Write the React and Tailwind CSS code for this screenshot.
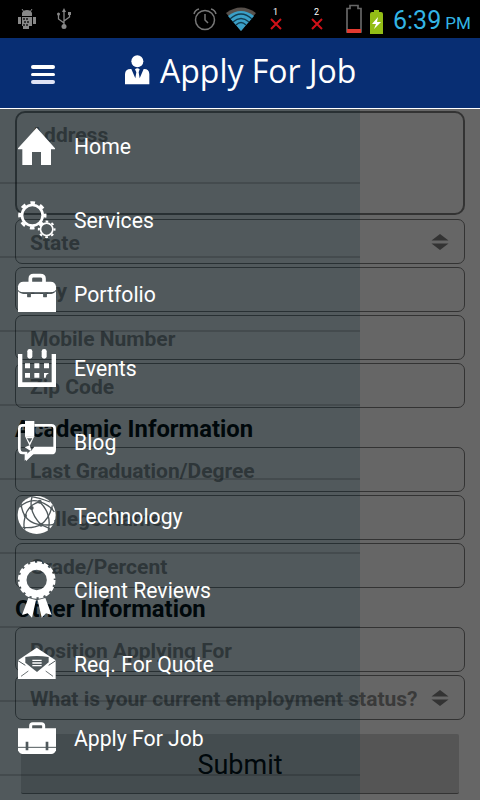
const dark = '#50595c';

const HomeIcon = () => <path d="M56-1 111 61v3H99v47H69V72H42v39H13V64H0v-3z" />;

const GearsIcon = () => (
  <g fill="none" stroke="#fff">
    <circle cx="43" cy="40" r="31" strokeWidth="8" />
    <circle cx="43" cy="40" r="38" strokeWidth="9" strokeDasharray="14 15.85" strokeDashoffset="7" />
    <circle cx="86" cy="82" r="18.5" strokeWidth="5" />
    <circle cx="86" cy="82" r="23.5" strokeWidth="6" strokeDasharray="8 10.46" strokeDashoffset="4" />
  </g>
);

const PortfolioIcon = () => (
  <>
    <path d="M37 18V8Q37-1 46-1H67Q78-1 78 8V18" fill="none" stroke="#fff" strokeWidth="11" />
    <path d="M0 40V31Q2 17 16 17H98Q112 17 114 31V40Q112 49 98 49H16Q2 49 0 40z" />
    <path d="M0 46Q6 54 17 54H28V63H38V54H76V63H86V54H98Q108 54 114 46V108H0z" />
    <path d="M8 49Q12 51 20 51H95Q103 51 107 49" fill="none" stroke={dark} strokeWidth="3" />
    <path d="M28 51h10v13H28zM76 51h10v13H76z" fill={dark} />
  </>
);

const EventsIcon = () => (
  <>
    <path d="M0 12H13V97H101V12H114V111H0z" />
    <rect x="28" y="-3" width="15" height="29" rx="7" />
    <rect x="71" y="-3" width="15" height="29" rx="7" />
    <path d="M21 40h15v15H21zM49 40h15v15H49zM78 40h15v15H78zM21 69h15v14H21zM49 69h15v14H49zM78 69h15l-8 6-2 8h-5z" />
  </>
);

const BlogIcon = () => (
  <>
    <path
      d="M21 4H14Q4 4 4 14V76Q4 87 14 87H24V102L42 87H100Q110 87 110 77V14Q110 4 100 4H49"
      fill="none"
      stroke="#fff"
      strokeWidth="8"
    />
    <path d="M21-9H49V38H21z" />
    <path d="M21 37H49L35 66z" />
    <path d="M27 43H43L35 56z" fill={dark} />
    <path d="M49 68H110V88H34z" />
    <path d="M20 70 35 64 40 78 24 92V112L49 88" />
  </>
);

const GlobeIcon = () => (
  <>
    <circle cx="56" cy="51" r="57" />
    <g fill="none" stroke={dark} strokeWidth="4">
      <path d="M4 28Q34 0 65 11T109 42" />
      <path d="M40-4Q62-1 96 12" />
      <path d="M65 11Q30 22 22 53T21 94" />
      <path d="M65 11Q102 48 91 96" />
      <path d="M42-3Q30 40 69 80" />
      <path d="M9 16Q15 75 69 80T110 66" />
      <path d="M69 80Q95 60 103 22" />
      <path d="M14 88Q46 92 69 80L96 92" />
    </g>
    <g fill={dark}>
      <circle cx="65" cy="11" r="6" />
      <circle cx="41" cy="30" r="6" />
      <circle cx="22" cy="53" r="5" />
      <circle cx="69" cy="80" r="6" />
      <circle cx="101" cy="32" r="4" />
    </g>
  </>
);

const AwardIcon = () => (
  <>
    <circle cx="56" cy="24" r="41" fill="none" stroke="#fff" strokeWidth="21" />
    <circle cx="56" cy="24" r="52" fill="none" stroke="#fff" strokeWidth="9" strokeDasharray="14 6.42" />
    <path d="M31 78 54 84 42 137 29 124 12 129zM82 78 59 84 71 137 84 124 101 129z" />
  </>
);

const QuoteIcon = () => (
  <>
    <path d="M56 5 113 43V99H0V43z" />
    <path d="M22 33Q56 27 92 33V49L57 78 22 50z" fill={dark} />
    <path d="M43 43H71M43 51H71M43 59H71" stroke="#fff" strokeWidth="4" />
    <path d="M0 44 22 58M92 58 113 44" fill="none" stroke={dark} strokeWidth="3" />
    <path d="M9 91 31 75M105 91 83 75" stroke={dark} strokeWidth="2.5" />
  </>
);

const BagIcon = () => (
  <>
    <path d="M38 27V17Q38 11 44 11H70Q77 11 77 17V27" fill="none" stroke="#fff" strokeWidth="9" />
    <path d="M0 25H114V91Q110 102 100 102H14Q4 102 0 91z" />
    <path d="M0 82H114" stroke={dark} strokeWidth="3" />
    <path d="M27 65V91M87 65V91" stroke={dark} strokeWidth="8" />
  </>
);

const menu = [
  { label: 'Home', Icon: HomeIcon },
  { label: 'Services', Icon: GearsIcon },
  { label: 'Portfolio', Icon: PortfolioIcon },
  { label: 'Events', Icon: EventsIcon },
  { label: 'Blog', Icon: BlogIcon },
  { label: 'Technology', Icon: GlobeIcon },
  { label: 'Client Reviews', Icon: AwardIcon },
  { label: 'Req. For Quote', Icon: QuoteIcon },
  { label: 'Apply For Job', Icon: BagIcon },
];

function StatusBar() {
  return (
    <div className="flex h-[38px] items-center bg-black">
      <svg className="ml-[17px] h-[22px] w-5" viewBox="0 0 20 22" fill="#888">
        <path d="M5 8V5Q6 2 10 2T15 5V8zM5 9H15V18H12V21H6V18H5zM1 9H4V16H1zM16 9H19V16H16z" />
        <path d="m5 1 2 3m8-3-2 3" stroke="#888" />
        <path d="M6 10h2v2H6zM9 10h2v2H9zM7 13h2v2H7zM10 13h2v2h-2zM6 16h2v2H6zM9 16h2v2H9z" fill="#333" />
      </svg>
      <svg className="ml-[19px] h-[22px] w-4" viewBox="0 0 16 22" fill="none" stroke="#888" strokeWidth="1.3">
        <path d="M8 3V18M8 15 2.500 11V7M8 13l5.500-4V6" />
        <path d="m8 0 2 4H6zM12 4h3v3h-3z" fill="#888" stroke="none" />
        <circle cx="2.500" cy="6" r="1.500" fill="#888" stroke="none" />
        <circle cx="8" cy="18.500" r="2.500" fill="#888" stroke="none" />
      </svg>
      <svg className="ml-[121px] h-6 w-6" viewBox="0 0 24 24" fill="none" stroke="#777" strokeWidth="1.500">
        <circle cx="12" cy="13" r="9.500" />
        <path d="M12 7v6l3 3M1 7q1-4 5-5M18 2q4 1 5 5" />
      </svg>
      <svg className="ml-2 h-6 w-8" viewBox="0 0 32 24">
        <path d="M1 6Q16-5 31 6L16 24z" fill="#57504b" />
        <path d="M3 9Q16-1 29 9L16 24z" fill="#3aa0c8" />
        <path d="M5 12Q16 2 27 12M8 15Q16 8 24 15M11 18Q16 13 21 18" fill="none" stroke="#123c50" strokeWidth="1.300" />
      </svg>
      <div className="ml-[11px] flex w-[15px] flex-col items-center font-[Roboto] text-[9px] leading-[9px] text-white">
        1
        <svg className="mt-px h-3 w-3" viewBox="0 0 12 12" stroke="#d01118" strokeWidth="2">
          <path d="m1 1 10 10M11 1 1 11" />
        </svg>
      </div>
      <div className="ml-[26px] flex w-[15px] flex-col items-center font-[Roboto] text-[9px] leading-[9px] text-white">
        2
        <svg className="mt-px h-3 w-3" viewBox="0 0 12 12" stroke="#d01118" strokeWidth="2">
          <path d="m1 1 10 10M11 1 1 11" />
        </svg>
      </div>
      <svg className="ml-[22px] h-[30px] w-4" viewBox="0 0 16 30">
        <path d="M1 4.500H4V1.500H12V4.500H15V28H1z" fill="none" stroke="#666" strokeWidth="1.700" />
        <path d="M1 25h14v4H1z" fill="#e23a30" />
      </svg>
      <svg className="ml-2 mt-[6px] h-6 w-[13px]" viewBox="0 0 13 24">
        <path d="M4 0H9V2H11Q13 2 13 4V24H0V4Q0 2 2 2H4z" fill="#93bd16" />
        <path d="M8 7 2 14H6L4 19 11 12H7z" fill="#fff" />
      </svg>
      <div className="ml-[10px] mt-[2px] flex items-baseline whitespace-nowrap font-[Roboto] text-[#33b5e5]">
        <span className="text-[25px] leading-none">6:39</span>
        <span className="ml-[4px] text-[17px] leading-none">PM</span>
      </div>
    </div>
  );
}

function Header() {
  return (
    <header className="flex h-[71px] items-center border-b border-white bg-[#082e73]">
      <div className="ml-[31px] flex w-6 flex-col gap-[4px] pt-[3px]">
        <span className="h-[3.500px] rounded-full bg-white" />
        <span className="h-[3.500px] rounded-full bg-white" />
        <span className="h-[3.500px] rounded-full bg-[#e0e4f5]" />
      </div>
      <svg className="mb-[7px] ml-[70px] h-[30px] w-[25px]" viewBox="0 0 75 90" fill="#fff">
        <circle cx="37" cy="19" r="18" />
        <path d="M0 88V57Q1 41 19 42L31 70 34 52 30 43Q37 37 44 43L41 52 44 70 56 42Q72 41 73 57V88z" />
      </svg>
      <h1 className="mb-[4px] ml-[10px] whitespace-nowrap font-['Open_Sans'] text-[32px] leading-none text-white">
        Apply For Job
      </h1>
    </header>
  );
}

function Field({ label, select }) {
  return (
    <div className="flex h-[45px] items-center justify-between rounded-[7px] border border-[#333] pl-[14px] pr-[15px]">
      <span className="whitespace-nowrap pt-[3px]">{label}</span>
      {select && (
        <svg className="h-4 w-[18px]" viewBox="0 0 18 16" fill="#333">
          <path d="m9 0 8.500 6.500H.5zM9 16l8.500-6.500H.5z" />
        </svg>
      )}
    </div>
  );
}

function Heading({ children }) {
  return <h2 className="flex h-[33px] items-center pt-[2px] text-[23.800px] font-bold text-black">{children}</h2>;
}

function ApplyForm() {
  return (
    <form className="flex flex-col gap-[3px] px-[15px] pt-[2px] font-[Roboto] text-[21px] font-bold leading-6 text-[#3a3a3a]">
      <div className="mb-px h-[104px] rounded-[10px] border-2 border-[#333] pl-[13px] pt-[10px]">Address</div>
      <Field label="State" select />
      <Field label="City" />
      <Field label="Mobile Number" />
      <Field label="Zip Code" />
      <Heading>Academic Information</Heading>
      <Field label="Last Graduation/Degree" />
      <Field label="College Name" />
      <Field label="Grade/Percent" />
      <Heading>Other Information</Heading>
      <Field label="Position Applying For" />
      <Field label="What is your current employment status?" select />
      <button
        type="button"
        className="mx-[6px] mt-[11px] h-[60px] rounded-[2px] border-b border-[#333] bg-[#555] pt-[2px] text-[27px] font-normal text-black"
      >
        Submit
      </button>
    </form>
  );
}

function Drawer() {
  return (
    <nav className="absolute left-0 top-0 h-full w-[360px] overflow-hidden bg-[#002837]/20 pt-px">
      <ul>
        {menu.map(({ label, Icon }) => (
          <li key={label} className="flex h-[74px] items-center gap-[18px] border-b-2 border-black/15 pl-[18px] pt-[2px]">
            <svg className="h-[38px] w-[38px] shrink-0 overflow-visible" viewBox="0 0 114 114" fill="#fff">
              <Icon />
            </svg>
            <span className="font-[Roboto] text-[21.200px] leading-6 text-white">{label}</span>
          </li>
        ))}
      </ul>
    </nav>
  );
}

export default function App() {
  return (
    <div className="h-[800px] w-[480px] overflow-hidden">
      <StatusBar />
      <Header />
      <main className="relative h-[691px] overflow-hidden bg-[#666]">
        <ApplyForm />
        <Drawer />
      </main>
    </div>
  );
}
